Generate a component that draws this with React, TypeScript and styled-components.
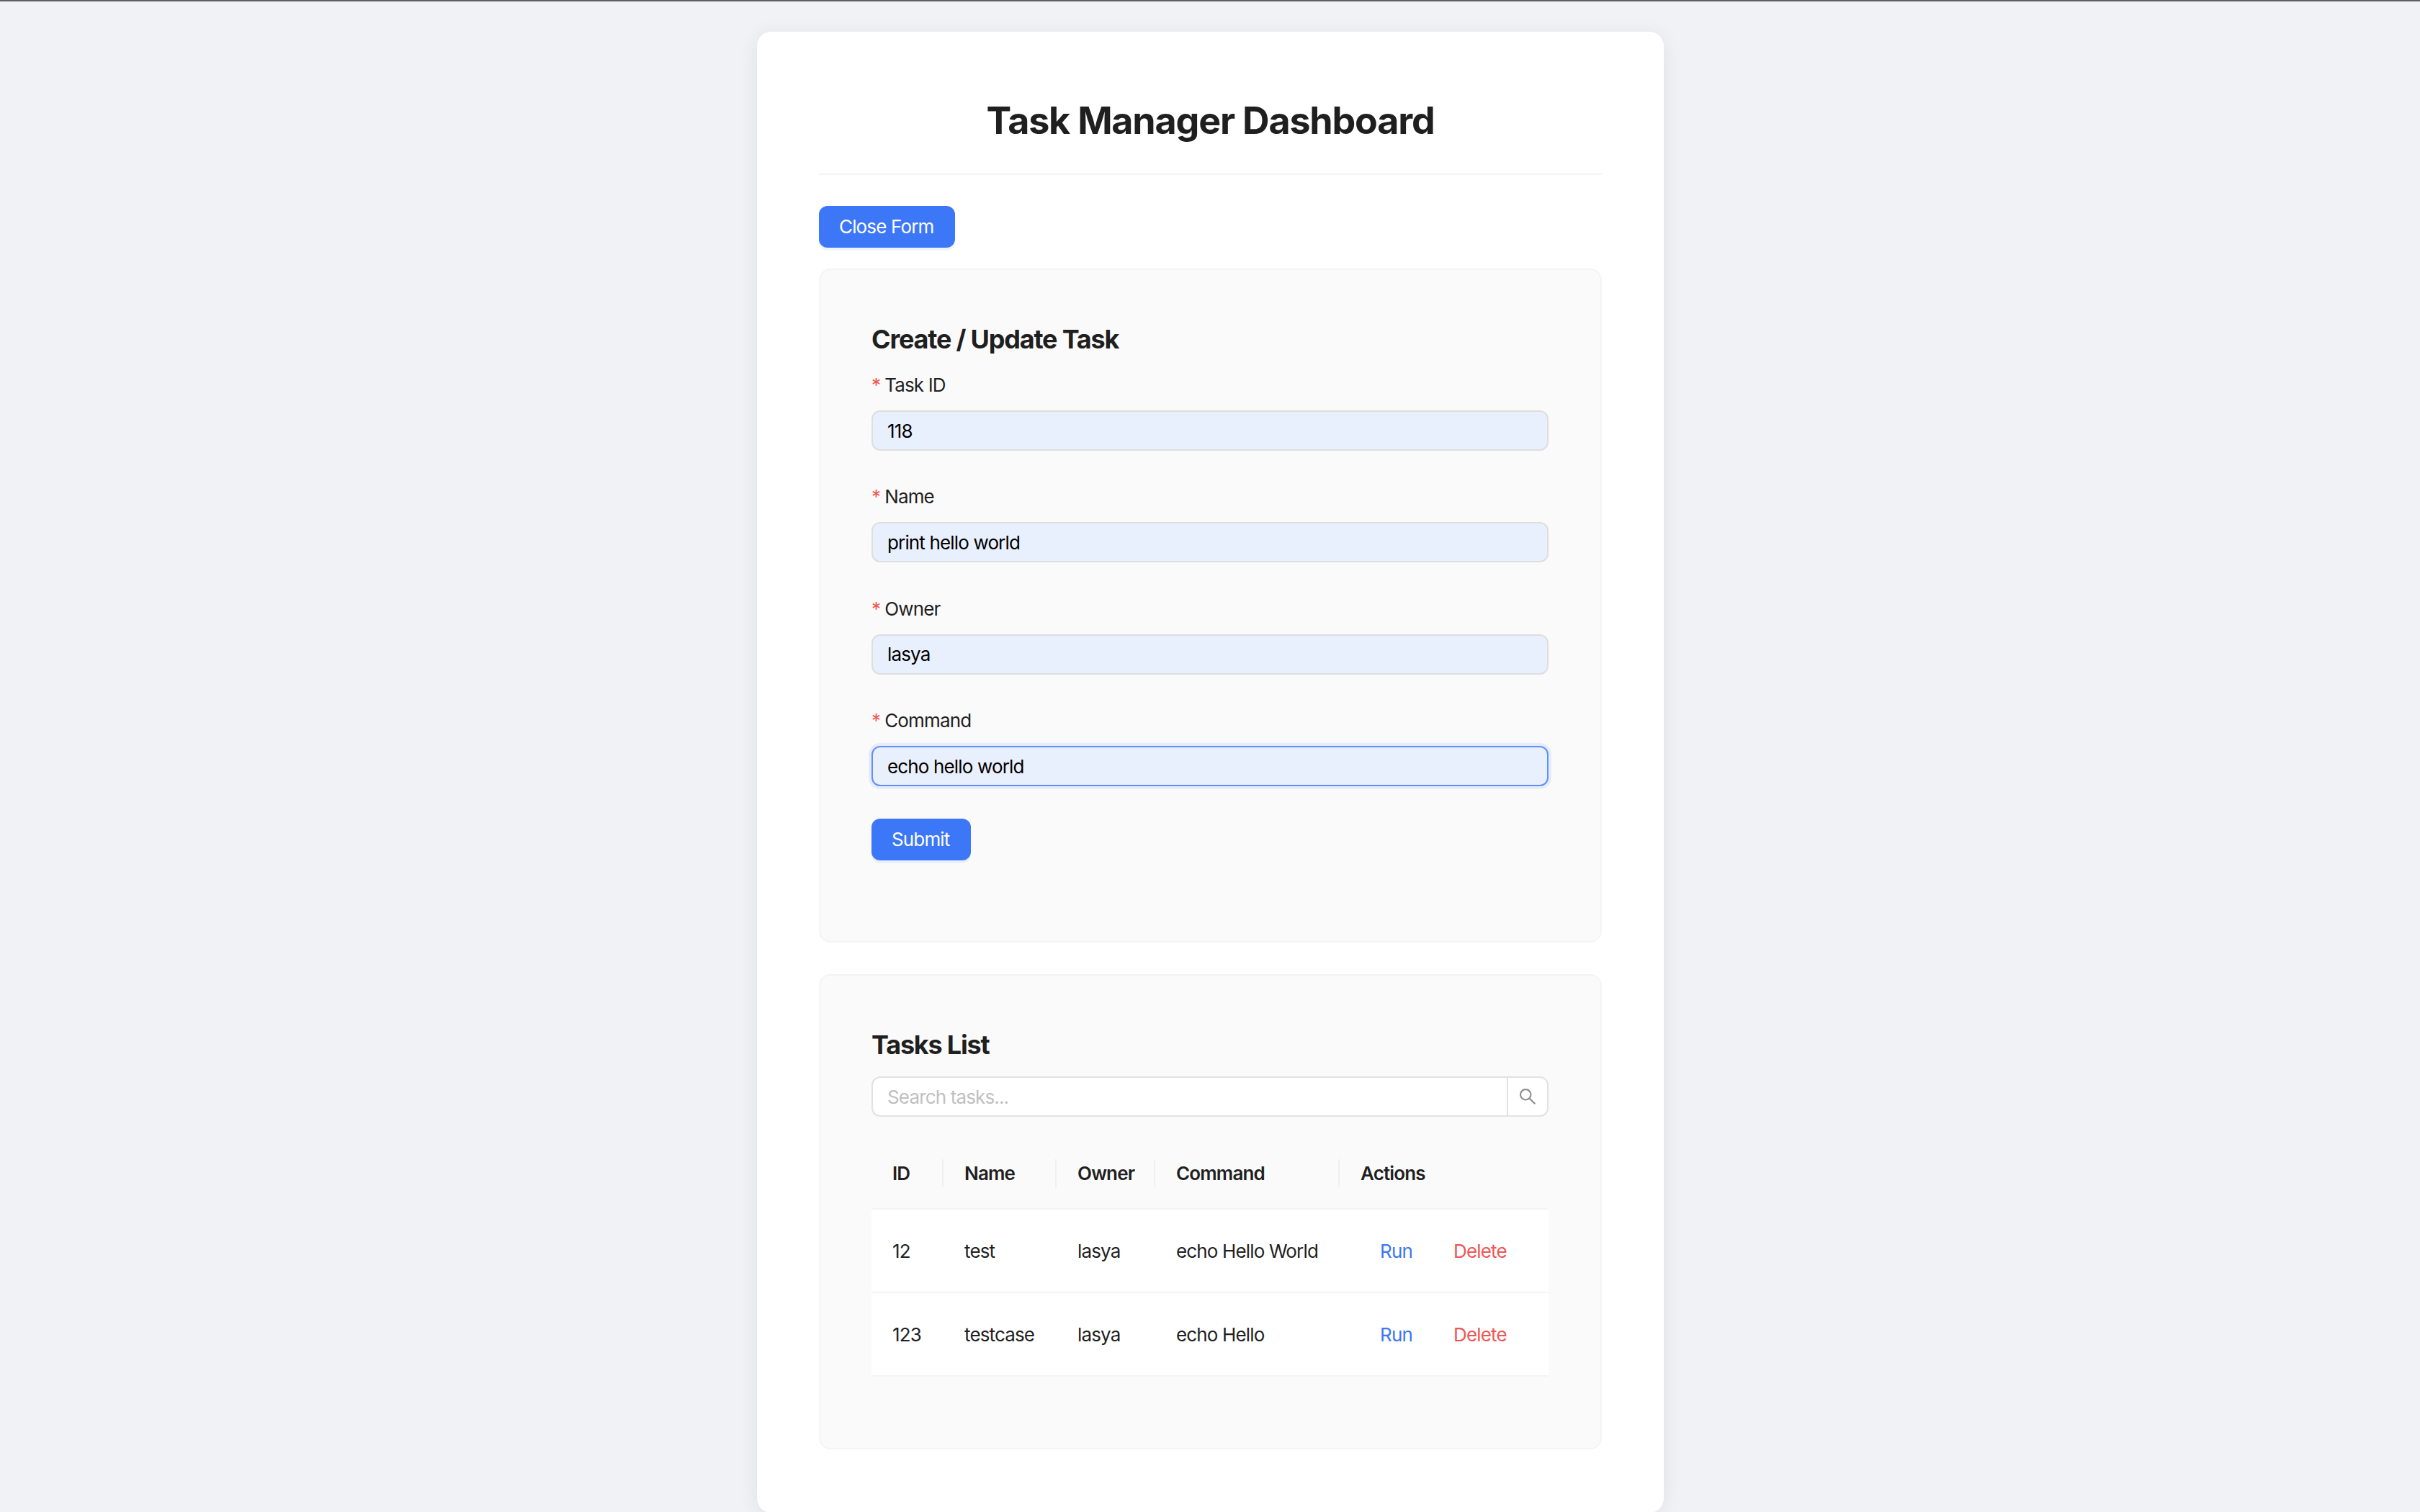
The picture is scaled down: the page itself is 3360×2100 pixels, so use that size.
import styled, { createGlobalStyle } from 'styled-components'
import { AiOutlineSearch } from 'react-icons/ai'

const GlobalStyle = createGlobalStyle`
  html, body {
    margin: 0;
    padding: 0;
    height: 2100px;
    overflow: hidden;
    background: #f0f2f6;
    font-family: Inter, 'Liberation Sans', sans-serif;
    letter-spacing: -0.85px;
    -webkit-font-smoothing: antialiased;
  }
  * {
    box-sizing: border-box;
  }
`

const TopLine = styled.div`
  height: 2px;
  background: #5c5f66;
`

const Page = styled.div`
  display: flex;
  justify-content: center;
  padding: 42px 0 0 1px;
`

const Card = styled.main`
  width: 1259px;
  height: 2057px;
  padding: 0 86px;
  background: #fff;
  border-radius: 20px;
  box-shadow: 0 4px 28px rgba(0, 0, 0, 0.08);
`

const Title = styled.h1`
  height: 199px;
  margin: 0 0 43px;
  padding-top: 90px;
  border-bottom: 2px solid #f4f4f4;
  color: #1f1f1f;
  font-size: 52px;
  font-weight: 700;
  line-height: 68px;
  letter-spacing: -1.2px;
  text-align: center;
`

const Button = styled.button`
  display: block;
  height: 58px;
  padding: 0 30px 0 28px;
  border: 0;
  border-radius: 12px;
  background: #3c77f7;
  box-shadow: 0 4px 0 rgba(60, 119, 247, 0.08);
  color: #fff;
  font-family: inherit;
  font-size: 26px;
  letter-spacing: inherit;
  line-height: 58px;
`

const Panel = styled.section<{ $height: number }>`
  height: ${({ $height }) => $height}px;
  margin-top: 29px;
  padding: 74px 72px 0 71px;
  background: #fafafa;
  border: 2px solid #f4f4f4;
  border-radius: 16px;

  & + & {
    margin-top: 44px;
  }
`

const PanelTitle = styled.h2`
  margin: 0 0 22px;
  color: #1f1f1f;
  font-size: 36px;
  font-weight: 700;
  line-height: 44px;
  letter-spacing: -1.2px;
`

const Field = styled.div`
  margin-bottom: 44.4px;
`

const Label = styled.label`
  display: block;
  height: 40px;
  margin-bottom: 15px;
  color: #1f1f1f;
  font-size: 26px;
  line-height: 40px;

  &::before {
    content: '*';
    margin-right: 6px;
    color: #f05555;
  }
`

const Input = styled.input<{ $focused?: boolean }>`
  display: block;
  width: 100%;
  height: 56px;
  padding: 0 20px;
  border: 2px solid ${({ $focused }) => ($focused ? '#5f90f8' : '#dedede')};
  border-radius: 12px;
  outline: 0;
  background: #e9f0fd;
  box-shadow: ${({ $focused }) =>
    $focused ? '0 0 0 4px rgba(60, 119, 247, 0.1)' : 'none'};
  color: #000;
  font-family: inherit;
  font-size: 26px;
  letter-spacing: inherit;
`

const SearchBox = styled.div`
  display: flex;
  height: 56px;
  margin-bottom: 30px;
`

const SearchInput = styled.input`
  flex: 1;
  min-width: 0;
  padding: 0 20px;
  border: 2px solid #e2e2e2;
  border-right: 0;
  border-radius: 12px 0 0 12px;
  outline: 0;
  background: #fff;
  font-family: inherit;
  font-size: 26px;
  letter-spacing: inherit;

  &::placeholder {
    color: #bfbfbf;
  }
`

const SearchButton = styled.button`
  display: flex;
  align-items: center;
  justify-content: center;
  width: 58px;
  padding: 0;
  border: 2px solid #e2e2e2;
  border-radius: 0 12px 12px 0;
  background: #fff;
  color: #8c8c8c;
  font-size: 28px;
`

const Table = styled.table`
  width: 940px;
  border-collapse: collapse;
  table-layout: fixed;
`

const HeadCell = styled.th<{ $width: number }>`
  position: relative;
  width: ${({ $width }) => $width}px;
  height: 98px;
  padding: 0 0 0 29px;
  border-bottom: 2px solid #f4f4f4;
  color: #1f1f1f;
  font-size: 26px;
  font-weight: 600;
  text-align: left;

  &:not(:last-child)::after {
    content: '';
    position: absolute;
    top: 29px;
    right: 0;
    width: 2px;
    height: 39px;
    background: #f0f0f0;
  }
`

const Row = styled.tr`
  background: #fff;
`

const Cell = styled.td`
  height: 116px;
  padding: 0 0 0 29px;
  border-bottom: 2px solid #f4f4f4;
  color: #1f1f1f;
  font-size: 26px;
`

const Actions = styled.div`
  display: flex;
  padding-left: 27px;
`

const ActionLink = styled.a<{ $danger?: boolean }>`
  color: ${({ $danger }) => ($danger ? '#f05555' : '#3c77f7')};
  width: ${({ $danger }) => ($danger ? 'auto' : '102px')};
`

const fields = [
  { label: 'Task ID', value: '118' },
  { label: 'Name', value: 'print hello world' },
  { label: 'Owner', value: 'lasya' },
  { label: 'Command', value: 'echo hello world', focused: true },
]

const columns = [
  { name: 'ID', width: 100 },
  { name: 'Name', width: 157 },
  { name: 'Owner', width: 137 },
  { name: 'Command', width: 256 },
  { name: 'Actions', width: 290 },
]

const tasks = [
  { id: 12, name: 'test', owner: 'lasya', command: 'echo Hello World' },
  { id: 123, name: 'testcase', owner: 'lasya', command: 'echo Hello' },
]

const App = () => {
  return (
    <>
      <GlobalStyle />
      <TopLine />
      <Page>
        <Card>
          <Title>Task Manager Dashboard</Title>
          <Button>Close Form</Button>

          <Panel $height={936}>
            <PanelTitle>Create / Update Task</PanelTitle>
            {fields.map((field) => (
              <Field key={field.label}>
                <Label>{field.label}</Label>
                <Input readOnly value={field.value} $focused={field.focused} />
              </Field>
            ))}
            <Button>Submit</Button>
          </Panel>

          <Panel $height={660}>
            <PanelTitle>Tasks List</PanelTitle>
            <SearchBox>
              <SearchInput placeholder="Search tasks..." />
              <SearchButton>
                <AiOutlineSearch />
              </SearchButton>
            </SearchBox>
            <Table>
              <thead>
                <tr>
                  {columns.map((column) => (
                    <HeadCell key={column.name} $width={column.width}>
                      {column.name}
                    </HeadCell>
                  ))}
                </tr>
              </thead>
              <tbody>
                {tasks.map((task) => (
                  <Row key={task.id}>
                    <Cell>{task.id}</Cell>
                    <Cell>{task.name}</Cell>
                    <Cell>{task.owner}</Cell>
                    <Cell>{task.command}</Cell>
                    <Cell>
                      <Actions>
                        <ActionLink>Run</ActionLink>
                        <ActionLink $danger>Delete</ActionLink>
                      </Actions>
                    </Cell>
                  </Row>
                ))}
              </tbody>
            </Table>
          </Panel>
        </Card>
      </Page>
    </>
  )
}

export default App
